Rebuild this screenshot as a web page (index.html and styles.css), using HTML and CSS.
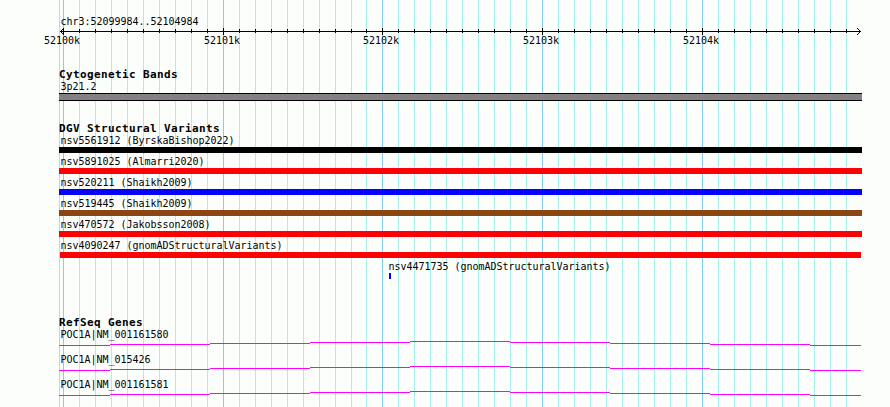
FILE: index.html
```
<!DOCTYPE html>
<html lang="en">
<head>
<meta charset="utf-8">
<title>chr3:52099984..52104984</title>
<link rel="stylesheet" href="styles.css">
</head>
<body>
<svg class="grid" width="890" height="407" shape-rendering="crispEdges" aria-hidden="true">
  <path class="edge" d="M59.5 0V407"/>
  <path class="minor" id="minor"/>
  <path class="major" id="major"/>
</svg>
<main class="browser">
  <header class="label region">chr3:52099984..52104984</header>
  <svg class="ruler" width="890" height="20">
    <path class="axis" d="M60 3.5H861" shape-rendering="crispEdges"/>
    <path class="axis" id="ticks" shape-rendering="crispEdges"/>
    <path class="arrow" d="M64 0L60.5 3.5L64 7M857 0L860.5 3.5L857 7"/>
    <g class="tick-labels">
      <text x="44" y="16">52100k</text>
      <text x="204" y="16">52101k</text>
      <text x="363" y="16">52102k</text>
      <text x="523" y="16">52103k</text>
      <text x="683" y="16">52104k</text>
    </g>
  </svg>
  <section class="track cyto">
    <h2>Cytogenetic Bands</h2>
    <div class="label">3p21.2</div>
    <div class="band"></div>
  </section>
  <section class="track variants">
    <h2>DGV Structural Variants</h2>
    <div class="variant"><div class="label">nsv5561912 (ByrskaBishop2022)</div><div class="bar black"></div></div>
    <div class="variant"><div class="label">nsv5891025 (Almarri2020)</div><div class="bar red"></div></div>
    <div class="variant"><div class="label">nsv520211 (Shaikh2009)</div><div class="bar blue"></div></div>
    <div class="variant"><div class="label">nsv519445 (Shaikh2009)</div><div class="bar brown"></div></div>
    <div class="variant"><div class="label">nsv470572 (Jakobsson2008)</div><div class="bar red"></div></div>
    <div class="variant"><div class="label">nsv4090247 (gnomADStructuralVariants)</div><div class="bar red inset"></div></div>
    <div class="variant small"><div class="label">nsv4471735 (gnomADStructuralVariants)</div><div class="bar blue"></div></div>
  </section>
  <section class="track genes">
    <h2>RefSeq Genes</h2>
    <div class="gene"><div class="label">POC1A|NM_001161580</div>
      <svg class="intron" width="802" height="5" shape-rendering="crispEdges"><path d="M0 4.5H51M51 3.5H151M151 2.5H251M251 1.5H351M351 .5H451M451 1.5H551M551 2.5H651M651 3.5H751M751 4.5H802"/></svg></div>
    <div class="gene"><div class="label">POC1A|NM_015426</div>
      <svg class="intron" width="802" height="5" shape-rendering="crispEdges"><path d="M0 4.5H51M51 3.5H151M151 2.5H251M251 1.5H351M351 .5H451M451 1.5H551M551 2.5H651M651 3.5H751M751 4.5H802"/></svg></div>
    <div class="gene"><div class="label">POC1A|NM_001161581</div>
      <svg class="intron" width="802" height="5" shape-rendering="crispEdges"><path d="M0 4.5H51M51 3.5H151M151 2.5H251M251 1.5H351M351 .5H451M451 1.5H551M551 2.5H651M651 3.5H751M751 4.5H802"/></svg></div>
  </section>
</main>
<script src="grid.js"></script>
</body>
</html>
```
FILE: styles.css
```
* { box-sizing: border-box; }
body {
  margin: 0;
  width: 890px;
  height: 407px;
  overflow: hidden;
  background: #fcfefc;
  color: #000;
  font: 10px/14px "DejaVu Sans Mono", monospace;
  letter-spacing: -0.02px;
}
svg { display: block; fill: none; }
.grid { position: absolute; top: 0; left: 0; }
.edge { stroke: #b4dedc; }
.minor { stroke: #a9eeec; }
.major { stroke: #84ceec; }
.browser { position: relative; padding-top: 15px; height: 407px; }
.label { height: 12px; padding-left: 60.5px; white-space: pre; }
.ruler { margin-top: 1px; }
.axis, .arrow { stroke: #000; }
.tick-labels { fill: #000; }
h2 {
  margin: 0;
  height: 12px;
  padding-left: 59px;
  font-size: 11px;
  line-height: 14px;
  font-weight: bold;
  letter-spacing: 0.377px;
  white-space: pre;
}
.cyto { margin-top: 20px; }
.band {
  width: 803px;
  height: 8px;
  margin: 1px 0 0 59px;
  background: #848084;
  border: solid #000;
  border-width: 1px 0;
}
.variants { margin-top: 21px; }
.variant { height: 21px; }
.bar { width: 803px; height: 6px; margin: 1px 0 0 59px; }
.bar.inset { width: 801px; margin-left: 60px; }
.small .label { padding-left: 388.5px; }
.small .bar { width: 2px; margin-left: 389px; }
.black { background: #000; }
.red { background: #fc0204; }
.blue { background: #0402fc; }
.brown { background: #8c4614; }
.genes { margin-top: 35px; }
.gene { height: 25px; }
.intron { margin: 1px 0 0 59px; stroke: #fc02fc; }
```
FILE: grid.js
```
// One grid line every 100 bases, a major one every 1000.
let minor = "", major = "", ticks = "";
for (let i = 0; i < 50; i++) {
  const x = 63.5 + 16 * i - (i >= 19 ? 1 : 0);
  if (i % 10 === 0) {
    major += `M${x} 0V407`;
    ticks += `M${x} 0V7`;
  } else {
    minor += `M${x} 0V407`;
    ticks += `M${x} 1V5`;
  }
}
document.getElementById("minor").setAttribute("d", minor);
document.getElementById("major").setAttribute("d", major);
document.getElementById("ticks").setAttribute("d", ticks);
```
